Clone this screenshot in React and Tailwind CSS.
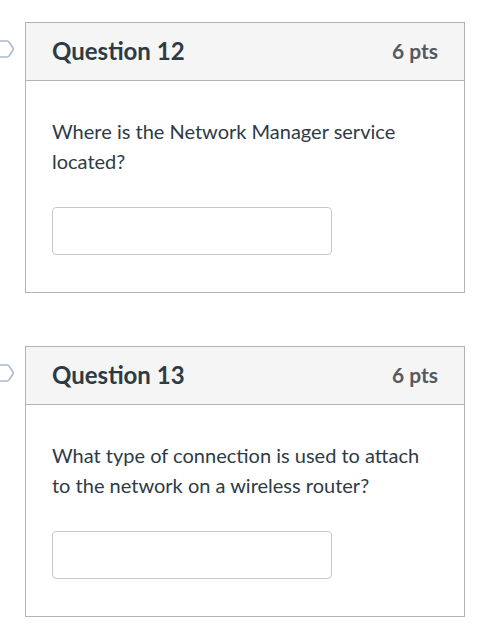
const QUESTIONS = [
  { num: 12, pts: 6, text: 'Where is the Network Manager service located?' },
  { num: 13, pts: 6, text: 'What type of connection is used to attach to the network on a wireless router?' },
]

function Flag() {
  return (
    <svg className="absolute left-[-8px] top-[17px]" width="24" height="20" viewBox="0 0 24 20" fill="none">
      <path d="M1 2 H15 Q16 2 17 3 L21 9 Q21.6 10 21 11 L17 17 Q16 18 15 18 H1 Z" stroke="#a9bbcc" strokeWidth="1.6" />
    </svg>
  )
}

function Question({ q }) {
  return (
    <div className="relative">
      <Flag />
      <div className="ml-[25px] w-[440px] border border-[#b4b4b4] bg-white">
        <div className="h-[58px] flex items-center justify-between px-[26px] pb-[2px] bg-[#f5f5f5] border-b border-[#b4b4b4]">
          <h3 className="text-[24px] font-bold text-[#2d3b45]">Question {q.num}</h3>
          <span className="text-[21px] font-bold text-[#555a5e]">{q.pts} pts</span>
        </div>
        <div className="px-[26px] pt-[35px] pb-[37px]">
          <p className="text-[20px] leading-[30px] text-[#2d3b45]">{q.text}</p>
          <input className="mt-[31px] block w-[280px] h-[48px] border border-[#c9c9c9] rounded-[4px] bg-white" />
        </div>
      </div>
    </div>
  )
}

export default function App() {
  return (
    <div className="min-h-screen bg-white pt-[22px] overflow-hidden" style={{ fontFamily: 'Lato, "Liberation Sans", sans-serif' }}>
      <div className="flex flex-col gap-[53px]">
        {QUESTIONS.map(q => <Question key={q.num} q={q} />)}
      </div>
    </div>
  )
}
